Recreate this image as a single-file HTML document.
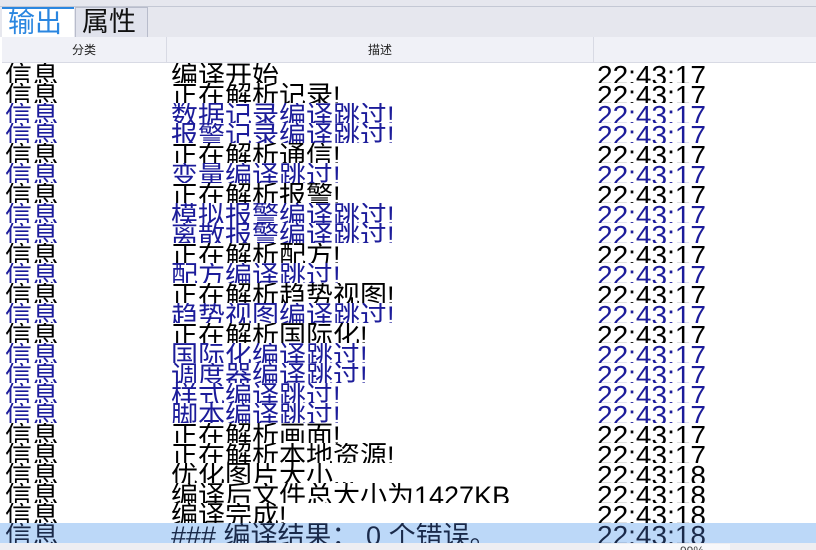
<!DOCTYPE html>
<html><head><meta charset="utf-8"><style>
*{margin:0;padding:0;box-sizing:border-box}
body{width:816px;height:550px;overflow:hidden;background:#fff;font-family:"Liberation Sans","Noto Sans CJK SC",sans-serif;position:relative}
.tabbar{position:absolute;left:0;top:0;width:816px;height:37px;background:#e6e7ee}
.tabbar:after{content:"";position:absolute;left:0;right:0;top:6px;height:1px;background:#c4c8d4}
.tab{position:absolute;top:7px;height:30px;font-size:27px;line-height:28px;padding-left:6px}
.t1{left:2px;width:72px;background:#fff;color:#2a86e0;border-top:2px solid #2a86e0;z-index:2}
.t2{left:75px;width:73px;background:#e0e2ec;border:1px solid #b8bccb;border-bottom:none;color:#111;z-index:2}
.hdr{position:absolute;left:2px;top:37px;width:814px;height:26px;background:#f0f1f7;border-bottom:1px solid #d8dae4;font-size:12px;color:#222}
.hdr span{position:absolute;top:0;height:26px;line-height:26px;text-align:center;border-right:1px solid #d8dae4}
.rows{position:absolute;left:0;top:63px;width:816px}
.r{position:relative;height:20px;overflow:hidden;font-size:28px;line-height:20px;color:#000;white-space:nowrap}
.r span{position:absolute;top:3px;line-height:20px}
.r .a{left:5px;font-size:27px}.r .b{left:171px;font-size:27px}.r .c{left:597px}
.bl{color:#1c1c9a}
.sel{background:#bcd8f8;color:#1a2a4a}
.sb{position:absolute;left:0;top:543px;width:816px;height:7px;background:#eeeef2}
.sb div{position:absolute;left:600px;top:1px;width:130px;height:6px;background:#f8f8fa;font-size:12px;color:#444;overflow:hidden;line-height:14px;padding-left:80px}
</style></head><body>
<div class="tabbar"><div class="tab t1">输出</div><div class="tab t2">属性</div></div>
<div class="hdr"><span style="left:0;width:165px">分类</span><span style="left:165px;width:427px">描述</span><span style="left:592px;width:222px;border:none"></span></div>
<div class="rows">
<div class="r"><span class="a">信息</span><span class="b">编译开始</span><span class="c">22:43:17</span></div>
<div class="r"><span class="a">信息</span><span class="b">正在解析记录!</span><span class="c">22:43:17</span></div>
<div class="r bl"><span class="a">信息</span><span class="b">数据记录编译跳过!</span><span class="c">22:43:17</span></div>
<div class="r bl"><span class="a">信息</span><span class="b">报警记录编译跳过!</span><span class="c">22:43:17</span></div>
<div class="r"><span class="a">信息</span><span class="b">正在解析通信!</span><span class="c">22:43:17</span></div>
<div class="r bl"><span class="a">信息</span><span class="b">变量编译跳过!</span><span class="c">22:43:17</span></div>
<div class="r"><span class="a">信息</span><span class="b">正在解析报警!</span><span class="c">22:43:17</span></div>
<div class="r bl"><span class="a">信息</span><span class="b">模拟报警编译跳过!</span><span class="c">22:43:17</span></div>
<div class="r bl"><span class="a">信息</span><span class="b">离散报警编译跳过!</span><span class="c">22:43:17</span></div>
<div class="r"><span class="a">信息</span><span class="b">正在解析配方!</span><span class="c">22:43:17</span></div>
<div class="r bl"><span class="a">信息</span><span class="b">配方编译跳过!</span><span class="c">22:43:17</span></div>
<div class="r"><span class="a">信息</span><span class="b">正在解析趋势视图!</span><span class="c">22:43:17</span></div>
<div class="r bl"><span class="a">信息</span><span class="b">趋势视图编译跳过!</span><span class="c">22:43:17</span></div>
<div class="r"><span class="a">信息</span><span class="b">正在解析国际化!</span><span class="c">22:43:17</span></div>
<div class="r bl"><span class="a">信息</span><span class="b">国际化编译跳过!</span><span class="c">22:43:17</span></div>
<div class="r bl"><span class="a">信息</span><span class="b">调度器编译跳过!</span><span class="c">22:43:17</span></div>
<div class="r bl"><span class="a">信息</span><span class="b">样式编译跳过!</span><span class="c">22:43:17</span></div>
<div class="r bl"><span class="a">信息</span><span class="b">脚本编译跳过!</span><span class="c">22:43:17</span></div>
<div class="r"><span class="a">信息</span><span class="b">正在解析画面!</span><span class="c">22:43:17</span></div>
<div class="r"><span class="a">信息</span><span class="b">正在解析本地资源!</span><span class="c">22:43:17</span></div>
<div class="r"><span class="a">信息</span><span class="b">优化图片大小...</span><span class="c">22:43:18</span></div>
<div class="r"><span class="a">信息</span><span class="b">编译后文件总大小为1427KB</span><span class="c">22:43:18</span></div>
<div class="r"><span class="a">信息</span><span class="b">编译完成!</span><span class="c">22:43:18</span></div>
<div class="r sel"><span class="a">信息</span><span class="b">### 编译结果： 0 个错误。</span><span class="c">22:43:18</span></div>
</div>
<div class="sb"><div>99%</div></div>
</body></html>
